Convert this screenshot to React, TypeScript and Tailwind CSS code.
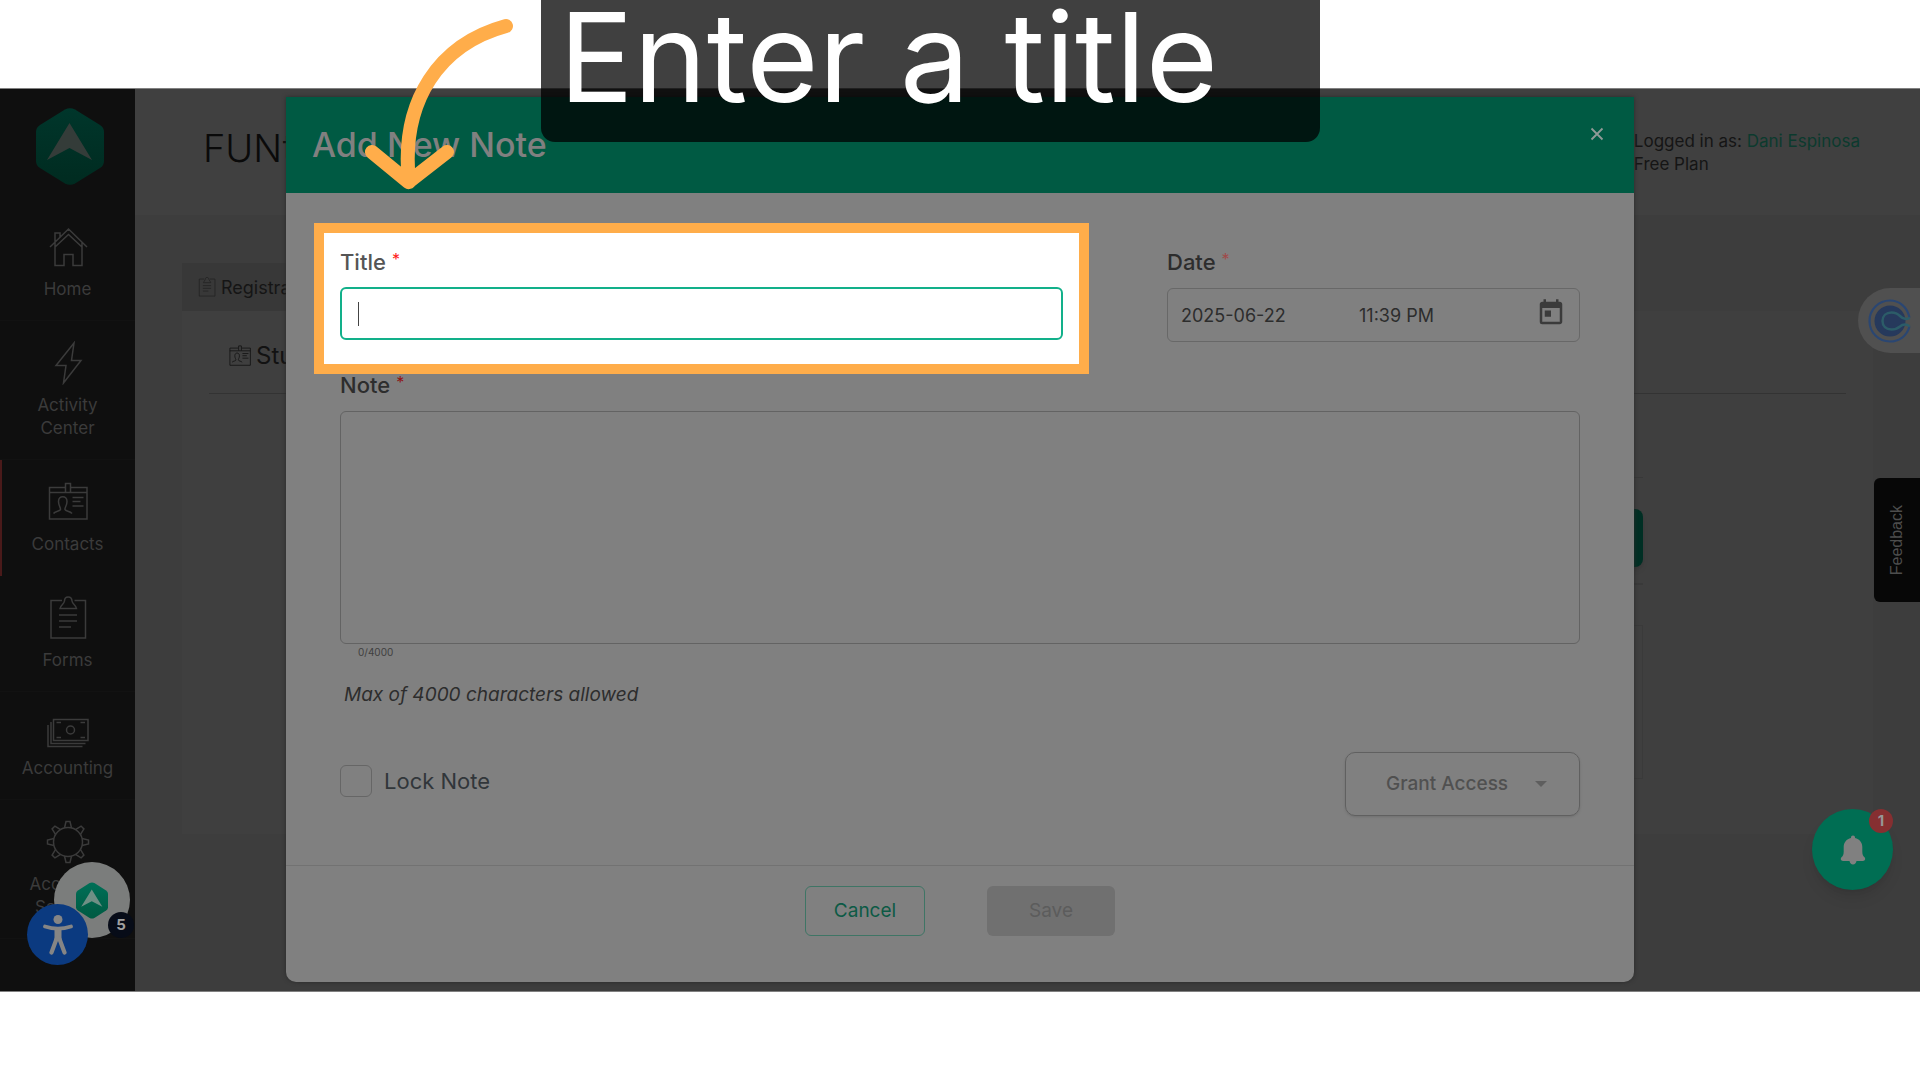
import type { ReactNode } from "react";
import { MdToday } from "react-icons/md";

type NavItemProps = {
  lines: string[];
  icon: ReactNode;
  active?: boolean;
};

function HexLogo({ id, className, top, bottom, arrow }: { id: string; className: string; top: string; bottom: string; arrow: string }) {
  return (
    <svg viewBox="0 0 68 77" className={className} aria-hidden="true">
      <defs>
        <linearGradient id={id} x1="0" y1="0" x2="0" y2="1">
          <stop offset="0" stopColor={top} />
          <stop offset="1" stopColor={bottom} />
        </linearGradient>
      </defs>
      <path
        d="M29 1.5Q34 -1 39 1.5L64 17Q68 19.500 68 24V53Q68 57.500 64 60L39 75.500Q34 78 29 75.500L4 60Q0 57.500 0 53V24Q0 19.500 4 17Z"
        fill={`url(#${id})`}
      />
      <path d="M33.500 15L56 52L33.500 40L11 52Z" fill={arrow} />
    </svg>
  );
}

function ContactCard({ className }: { className: string }) {
  return (
    <svg viewBox="0 0 44 44" className={className} fill="none" stroke="currentColor" strokeWidth="1.5" aria-hidden="true">
      <path d="M19 7.500H3.500V39H41V7.500H25M3.500 12.500H19M25 12.500H41M19.500 3.500H24.500V12.500H19.500Z" />
      <path d="M7.500 33.500C9 31 14 31.500 14.500 29.500C14.800 27.500 12.500 26 12.500 21.500C12.500 15 21 15 21 21.500C21 26 18.500 27.500 19 29.500C19.500 31.500 24 31 26 33.500" />
      <path d="M26.500 17.500H37.500M26.500 21.500H34.500M26.500 26H37.500" />
    </svg>
  );
}

function Clipboard({ className }: { className: string }) {
  return (
    <svg viewBox="0 0 44 44" className={className} fill="none" stroke="currentColor" strokeWidth="1.500" aria-hidden="true">
      <path d="M16 4.500H5V42H39.500V4.500H28.500" />
      <path d="M14 12.500H30.500C30 9 26.500 8.500 26 5C25.800 -0.500 18.500 -0.500 18.500 5C18 8.500 14.500 9 14 12.500Z" />
      <path d="M13 19H31M13 25H31M13 31H25" />
    </svg>
  );
}

const navItems: NavItemProps[] = [
  {
    lines: ["Home"],
    icon: (
      <svg viewBox="0 0 44 44" className="size-11" fill="none" stroke="currentColor" strokeWidth="1.5">
        <path d="M4 22L22.500 4L41 22M9 17V40.500H18V29.500H27V40.500H36V17M9 22L22.500 9.500L36 22M9 17V8H14V12" />
      </svg>
    ),
  },
  {
    lines: ["Activity", "Center"],
    icon: (
      <svg viewBox="0 0 44 44" className="size-11" fill="none" stroke="currentColor" strokeWidth="1.5">
        <path d="M28 2L10 24.500H20L17.500 42L35 19.500H25.500Z" />
      </svg>
    ),
  },
  { lines: ["Contacts"], icon: <ContactCard className="size-11" />, active: true },
  { lines: ["Forms"], icon: <Clipboard className="size-11" /> },
  {
    lines: ["Accounting"],
    icon: (
      <svg viewBox="0 0 44 36" className="h-9 w-11" fill="none" stroke="currentColor" strokeWidth="1.5">
        <path d="M7.500 7.500H42V28.500H7.500ZM5 10V31.500H39.500M2 13V34.500H36.500" />
        <circle cx="24.500" cy="18" r="4" />
        <path d="M10.500 10.500H15M34.500 10.500H39M10.500 25.500H15M34.500 25.500H39" />
      </svg>
    ),
  },
  {
    lines: ["Accounts", "Settings"],
    icon: (
      <svg viewBox="0 0 44 44" className="size-11" fill="none" stroke="currentColor" strokeWidth="1.5">
        <circle cx="22" cy="22" r="14.500" />
        {[0, 45, 90, 135, 180, 225, 270, 315].map((angle) => (
          <path key={angle} d="M18.500 8L20 1.500H24L25.500 8" transform={`rotate(${angle} 22 22)`} />
        ))}
      </svg>
    ),
  },
];

function NavItem({ lines, icon, active }: NavItemProps) {
  return (
    <a
      href="#"
      className={
        active
          ? "flex flex-col items-center gap-[9px] py-5 text-[17px] leading-[23px] text-[#3b3b3b] shadow-[inset_2px_0_0_#4a1a1a]"
          : "flex flex-col items-center gap-[9px] py-5 text-[17px] leading-[23px] text-[#3b3b3b] shadow-[inset_0_-1px_0_#121212]"
      }
    >
      {icon}
      <span className="text-center">
        {lines.map((line) => (
          <span key={line} className="block">
            {line}
          </span>
        ))}
      </span>
    </a>
  );
}

function Sidebar() {
  return (
    <nav className="w-[135px] shrink-0 bg-[#0f0f0f]">
      <a href="#" aria-label="Dashboard" className="flex justify-center pt-[19px] pb-5 pl-1">
        <HexLogo id="nav-logo" className="h-[77px] w-[68px]" top="#00362b" bottom="#002b20" arrow="#343c39" />
      </a>
      {navItems.map((item) => (
        <NavItem key={item.lines[0]} {...item} />
      ))}
    </nav>
  );
}

function PageBehind() {
  return (
    <div className="flex min-w-0 flex-1 flex-col bg-[#3d3d3d] text-[#151515]">
      <header className="flex h-[126px] shrink-0 justify-between bg-[#404040] pr-[60px] pl-[68px]">
        <h1 className="pt-9 text-[38px] leading-[46px] font-light text-[#0a0a0a]">FUNt</h1>
        <p className="pt-[41px] text-[17px] leading-[23px]">
          Logged in as:{" "}
          <a href="#" className="text-[#0c3a2e]">
            Dani Espinosa
          </a>
          <br />
          Free Plan
        </p>
      </header>

      <main className="px-[47px] pt-12">
        <div className="flex h-12 w-[240px] items-center gap-1 bg-[#383838] pl-[15px] text-[18px]">
          <Clipboard className="size-5 text-[#1f1f1f]" />
          Registration
        </div>
        <section className="h-[523px] bg-[#3f3f3f] px-[27px]">
          <h2 className="flex h-[83px] items-center gap-1 border-b border-[#333333] pt-2 pl-[19px] text-[24px] text-[#121212]">
            <ContactCard className="size-6" />
            Student
          </h2>
          <div className="mr-[203px] ml-auto flex w-1/2 flex-col items-end pt-[83px]">
            <div className="h-8 w-full border-t border-[#383838]" />
            <div className="h-[58px] w-40 rounded-lg bg-[#002f24] shadow-md" />
            <div className="mt-4 h-[42px] w-full border-t-2 border-[#393939]" />
            <div className="h-[154px] w-full border border-[#3a3a3a]" />
          </div>
        </section>
      </main>
    </div>
  );
}

function FieldLabel({ htmlFor, children, starClass }: { htmlFor: string; children: ReactNode; starClass: string }) {
  return (
    <label htmlFor={htmlFor} className="flex gap-1.5 text-[22px] leading-[22px] font-medium">
      {children}
      <span className={starClass}>*</span>
    </label>
  );
}

function NoteDialog() {
  return (
    <form
      role="dialog"
      aria-labelledby="dialog-title"
      className="overflow-hidden rounded-b-[10px] bg-[#808080] text-[#2d2d2d] shadow-[0_0_4px_#2b2b2b]"
      onSubmit={(event) => event.preventDefault()}
    >
      <div className="flex h-24 items-start justify-between bg-[#005a43] pr-[30px] pl-[26px] text-[#808080]">
        <h2 id="dialog-title" className="pt-[26px] text-[34px] leading-[44px] font-medium">
          Add New Note
        </h2>
        <button type="button" aria-label="Close" className="pt-[30px]">
          <svg viewBox="0 0 14 14" className="size-3.5" stroke="#909a97" strokeWidth="1.8">
            <path d="M1.500 1.500L12.500 12.500M12.500 1.500L1.500 12.500" />
          </svg>
        </button>
      </div>

      <div className="px-7 pt-[30px] pb-[49px]">
        <div className="flex gap-[78px] pr-[26px]">
          <div className="flex-1 border-10 border-[#ffad4a] bg-white px-4 pt-[18px] pb-6 text-[#555555]">
            <FieldLabel htmlFor="title" starClass="text-[16px] leading-4 font-normal text-[#ff1a1a]">
              Title
            </FieldLabel>
            <div className="relative mt-3.5">
              <input
                id="title"
                type="text"
                className="block h-[53px] w-full rounded-md border-2 border-[#12b08a] bg-white px-4 text-[18px] outline-none"
              />
              <span className="absolute top-[15px] left-[18px] h-6 w-px bg-[#444444]" />
            </div>
          </div>

          <div className="w-[413px] pt-7">
            <FieldLabel htmlFor="date" starClass="text-[16px] leading-4 font-normal text-[#a04a4a]">
              Date
            </FieldLabel>
            <div className="mt-[15px] flex h-[54px] items-center rounded-md border border-[#686868] pr-[13px] pl-[13px] text-[18px]">
              <input id="date" type="text" defaultValue="2025-06-22" className="w-[178px] bg-transparent outline-none" />
              <input
                type="text"
                aria-label="Time"
                defaultValue="11:39 PM"
                className="w-[100px] bg-transparent outline-none"
              />
              <button type="button" aria-label="Open calendar" className="ml-auto pb-1 text-[#3b3b3b]">
                <MdToday size={30} />
              </button>
            </div>
          </div>
        </div>

        <div className="px-[26px]">
          <FieldLabel htmlFor="note" starClass="text-[16px] leading-4 font-normal text-[#8f1414]">
            Note
          </FieldLabel>
          <textarea
            id="note"
            className="mt-[15px] block h-[233px] w-full resize-none rounded-md border border-[#636363] p-4 text-[18px] outline-none"
          />
          <p className="pl-[18px] text-[10px] leading-4 text-[#3f3f3f]">0/4000</p>
          <p className="mt-[23px] pl-1 text-[19px] leading-6 italic">Max of 4000 characters allowed</p>

          <div className="mt-[45px] flex items-start justify-between">
            <label className="flex items-center gap-3 pt-[13px] text-[22px] leading-8 text-[#31363a]">
              <input type="checkbox" className="size-8 appearance-none rounded-md border border-[#666666]" />
              Lock Note
            </label>
            <button
              type="button"
              className="flex h-16 w-[235px] items-center justify-between rounded-[10px] border border-[#606060] pr-8 pl-10 text-[19px] font-medium text-[#505050] shadow-sm"
            >
              Grant Access
              <svg viewBox="0 0 12 6" className="h-1.5 w-3" fill="#5e5e5e">
                <path d="M0 0H12L6 6Z" />
              </svg>
            </button>
          </div>
        </div>
      </div>

      <div className="flex justify-center gap-[62px] border-t border-[#727272] pt-5 pb-[46px]">
        <button
          type="button"
          className="h-[50px] w-[120px] rounded-md border border-[#3f7565] text-[19px] text-[#0c5a45]"
        >
          Cancel
        </button>
        <button type="submit" disabled className="h-[50px] w-32 rounded-md bg-[#707070] text-[19px] text-[#5c5c5c]">
          Save
        </button>
      </div>
    </form>
  );
}

function FloatingWidgets() {
  return (
    <>
      <button
        type="button"
        aria-label="Scheduling"
        className="absolute top-[199px] right-0 flex h-[65px] w-[62px] items-center rounded-l-full bg-[#505050] pl-[10px]"
      >
        <svg viewBox="0 0 44 44" className="size-11" fill="none">
          <circle cx="22" cy="22" r="15.500" fill="#26395c" />
          <path d="M41.500 18.500C39 7.500 31 1.500 22 1.500C10.500 1.500 1.500 10.500 1.500 22S10.500 42.500 22 42.500C31 42.500 39 37 41.500 27.500" stroke="#2a4672" strokeWidth="2.200" />
          <path d="M41.500 18.500C39.500 21 35 20 32 17C29.500 14.500 27 13.500 23.500 13.500C18 13.500 14.500 17 14.500 22S18 30.500 23.500 30.500C27 30.500 29.500 29.500 32 27.500C35 24.500 39.500 25 41.500 27.500" stroke="#2c5c68" strokeWidth="2.500" />
        </svg>
      </button>

      <button
        type="button"
        className="absolute top-[389px] right-0 flex h-[124px] w-[46px] items-center justify-center rounded-l-md bg-[#070707] font-['Liberation_Sans',Arial,sans-serif] text-[16px] text-[#4d4d4d]"
      >
        <span className="rotate-180 [writing-mode:vertical-rl]">Feedback</span>
      </button>

      <button
        type="button"
        aria-label="Notifications"
        className="absolute top-[720px] right-[27px] flex size-[81px] items-center justify-center rounded-full bg-[#006e53] shadow-lg"
      >
        <svg viewBox="0 0 26 30" className="h-[30px] w-[26px]" fill="#808080">
          <path d="M13 0.500C14.200 0.500 15 1.300 15 2.500V3C19.500 4 22.300 7.500 22.300 12V16.500C22.300 19.500 23 20.800 24.500 22.300C25.800 23.600 25.300 26 23 26H16.500C16 28.200 14.900 29.500 13 29.500S10 28.200 9.500 26H3C0.700 26 0.200 23.600 1.500 22.300C3 20.800 3.700 19.500 3.700 16.500V12C3.700 7.500 6.500 4 11 3V2.500C11 1.300 11.800 0.500 13 0.500Z" />
        </svg>
        <span className="absolute top-0 right-0 flex size-6 items-center justify-center rounded-full bg-[#862f31] text-[15px] font-bold text-[#969696]">
          1
        </span>
      </button>

      <button
        type="button"
        aria-label="Help center"
        className="absolute top-[773px] left-[54px] flex size-[76px] items-center justify-center rounded-full bg-[#7b7d7c]"
      >
        <HexLogo id="help-logo" className="h-[37px] w-8" top="#006f57" bottom="#005a42" arrow="#6f8f85" />
        <span className="absolute top-[50px] left-[54px] flex size-[26px] items-center justify-center rounded-full bg-[#070c18] text-[15px] font-bold text-[#a0a0a0]">
          5
        </span>
      </button>

      <button
        type="button"
        aria-label="Accessibility"
        className="absolute top-[815px] left-[27px] flex size-[61px] items-center justify-center rounded-full bg-[#0b3a80]"
      >
        <svg viewBox="0 0 30 40" className="h-10 w-[30px]" fill="none" stroke="#858585" strokeLinecap="round" strokeLinejoin="round">
          <circle cx="15" cy="4.500" r="4.500" fill="#858585" stroke="none" />
          <path d="M2 11.500C11 14.500 19 14.500 28 11.500" strokeWidth="3.800" />
          <path d="M12.500 14.500H17.500V25H12.500Z" fill="#858585" strokeWidth="2" />
          <path d="M13.500 24L8.500 37.500M16.500 24L21.500 37.500" strokeWidth="4.200" />
        </svg>
      </button>
    </>
  );
}

export default function App() {
  return (
    <div className="relative min-h-screen bg-white pt-[88px] font-['Inter','Open_Sans',sans-serif]">
      <div className="relative grid overflow-hidden border-y border-[#808080]">
        <div className="flex h-0 min-h-full [grid-area:1/1]">
          <Sidebar />
          <PageBehind />
        </div>
        <FloatingWidgets />
        <div className="z-10 mx-[286px] pt-2 pb-[9px] [grid-area:1/1]">
          <NoteDialog />
        </div>
      </div>

      {/* walkthrough step callout */}
      <div className="absolute top-0 left-[541px] z-20 w-[779px] rounded-b-[14px] bg-black/75 pb-7 pl-[18px] text-[124px] leading-[114px] whitespace-nowrap text-white">
        Enter a title
      </div>
      <svg
        viewBox="0 0 160 180"
        className="absolute top-[16px] left-[360px] z-20 h-[180px] w-40"
        fill="none"
        stroke="#ffad4a"
        strokeWidth="14"
        strokeLinecap="round"
        strokeLinejoin="round"
        aria-hidden="true"
      >
        <path d="M146 10C80 28 40 84 49 166M12 136L48.500 166L87 136" />
      </svg>
    </div>
  );
}
